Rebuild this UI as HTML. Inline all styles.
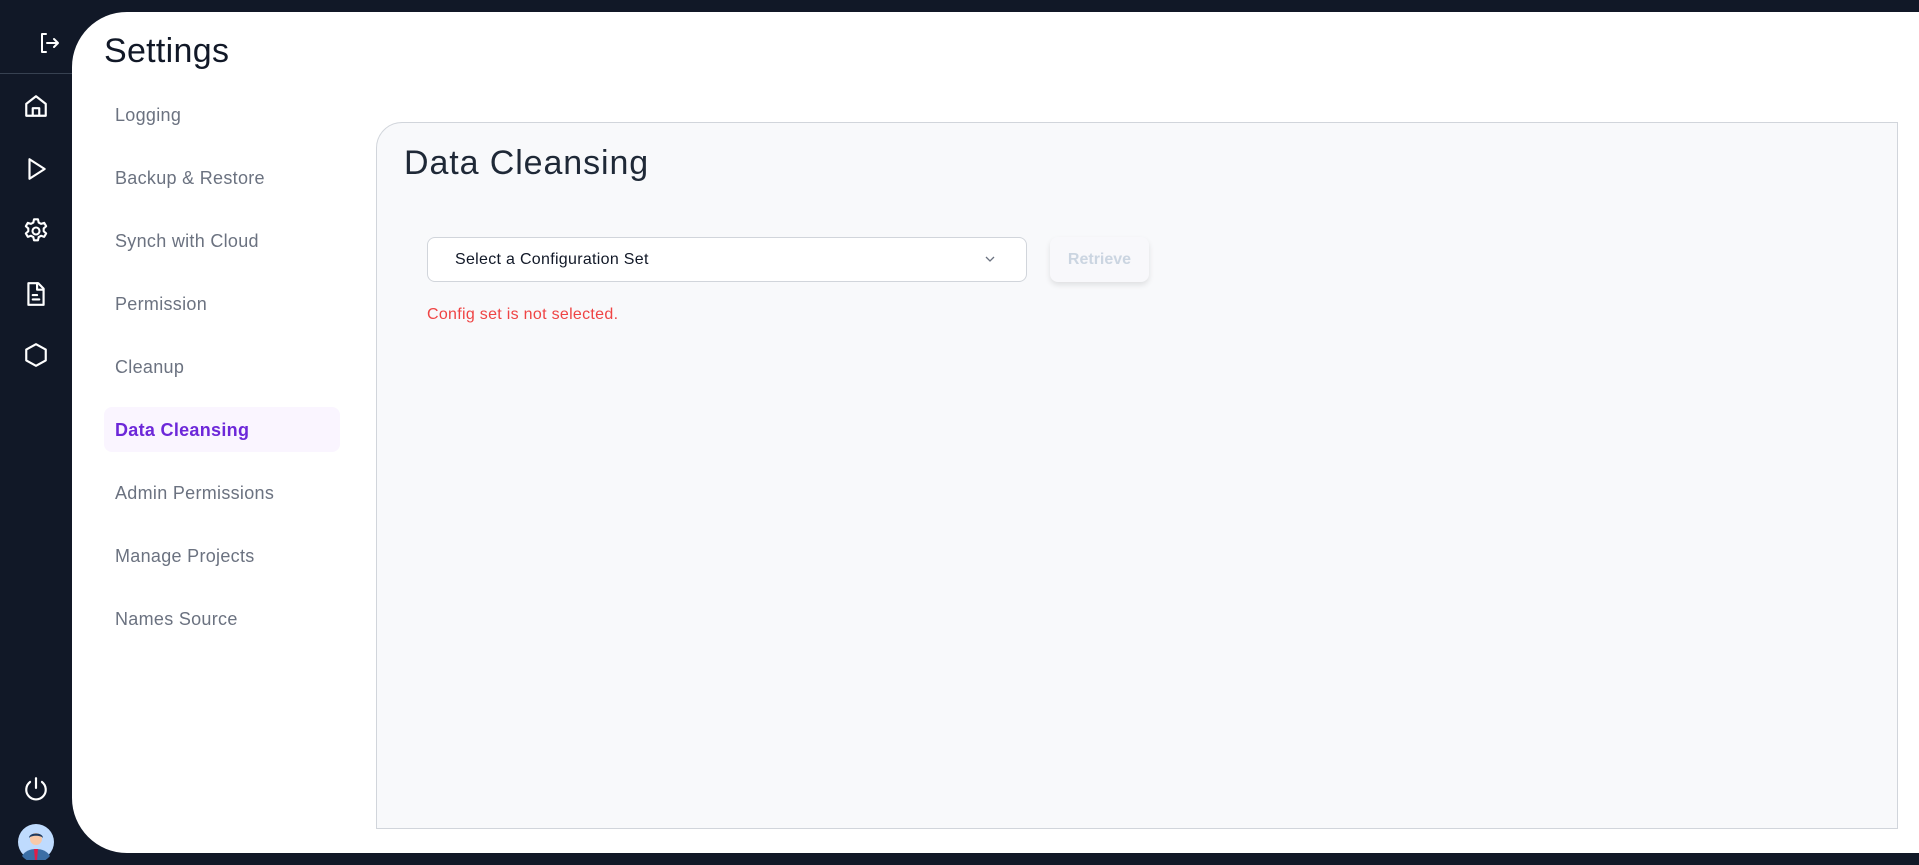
<!DOCTYPE html>
<html><head><meta charset="utf-8"><style>
*{margin:0;padding:0;box-sizing:border-box}
body{width:1919px;height:865px;background:#111827;font-family:"Liberation Sans",sans-serif;position:relative;overflow:hidden}
.main{position:absolute;left:72px;top:12px;width:1847px;height:841px;background:#fff;border-radius:55px 0 0 55px}
.ic{position:absolute;left:24px;width:24px;height:24px}
.div{position:absolute;left:0;top:73px;width:72px;height:1px;background:#374151}
h1{position:absolute;left:104px;top:32px;font-size:34px;font-weight:400;color:#111827;letter-spacing:0.3px}
.m{position:absolute;left:115px;font-size:18px;color:#6b7280;line-height:22px;letter-spacing:0.3px}
.act{position:absolute;left:104px;top:407px;width:236px;height:45px;background:#faf5ff;border-radius:8px}
.card{position:absolute;left:376px;top:122px;width:1522px;height:707px;background:#f8f9fb;border:1px solid #d1d5db;border-radius:26px 0 0 0}
.card h2{position:absolute;left:27px;top:21px;font-size:34px;font-weight:400;color:#1f2937;letter-spacing:0.9px}
.sel{position:absolute;left:50px;top:114px;width:600px;height:45px;background:#fff;border:1px solid #d1d5db;border-radius:8px;font-size:16px;color:#111827;padding-left:27px;line-height:43px;letter-spacing:0.3px}
.btn{position:absolute;left:673px;top:114px;width:99px;height:45px;background:#f8f8fb;border-radius:8px;box-shadow:0 3px 6px rgba(0,0,0,.1);color:#cbd5e1;font-weight:700;font-size:16px;text-align:center;line-height:45px}
.err{position:absolute;left:50px;top:182px;font-size:16px;color:#ef4444;letter-spacing:0.3px}
</style></head><body>
<svg class="ic" style="left:37px;top:31px" viewBox="0 0 24 24" fill="none" stroke="#fff" stroke-width="2" stroke-linecap="round" stroke-linejoin="round"><path d="M9 3H5v18h4M10 12h11M17 8l4 4-4 4"/></svg>
<div class="div"></div>
<svg class="ic" style="top:93px;width:26px;height:26px;left:23px" viewBox="0 0 24 24" fill="none" stroke="#fff" stroke-width="2" stroke-linejoin="round"><path d="M3 10l9-7 9 7v11H3z"/><path d="M9 21v-7h6v7"/></svg>
<svg class="ic" style="top:156px;width:26px;height:26px;left:23px" viewBox="0 0 24 24" fill="none" stroke="#fff" stroke-width="2" stroke-linejoin="round"><path d="M6 3l14 9-14 9z"/></svg>
<svg class="ic" style="top:217px;width:28px;height:28px;left:22px" viewBox="0 0 24 24" fill="none" stroke="#fff" stroke-width="1.8" stroke-linejoin="round"><circle cx="12" cy="12" r="3"/><path d="M10.3 2h3.4l.6 2.8 2 1.1 2.7-.9 1.7 2.9-2.1 1.9v2.4l2.1 1.9-1.7 2.9-2.7-.9-2 1.1-.6 2.8h-3.4l-.6-2.8-2-1.1-2.7.9-1.7-2.9 2.1-1.9V9.8L3.3 7.9 5 5l2.7.9 2-1.1z"/></svg>
<svg class="ic" style="top:281px;width:26px;height:26px;left:23px" viewBox="0 0 24 24" fill="none" stroke="#fff" stroke-width="2" stroke-linejoin="round"><path d="M5 2h9l5 5v15H5z"/><path d="M13 2v6h6M9 13h4M9 17h6" stroke-linecap="round"/></svg>
<svg class="ic" style="top:342px;width:26px;height:26px;left:23px" viewBox="0 0 24 24" fill="none" stroke="#fff" stroke-width="2" stroke-linejoin="round"><path d="M12 2l9 5v10l-9 5-9-5V7z"/></svg>
<svg class="ic" style="top:776px;width:26px;height:26px;left:23px" viewBox="0 0 24 24" fill="none" stroke="#fff" stroke-width="2" stroke-linecap="round"><path d="M12 2v9"/><path d="M6.5 5.5a9 9 0 1 0 11 0"/></svg>
<svg style="position:absolute;left:18px;top:824px" width="36" height="36" viewBox="0 0 36 36"><circle cx="18" cy="18" r="18" fill="#bfdbfe"/><path d="M4 32c3-5 8-7 14-7s11 2 14 7a18 18 0 0 1-28 0z" fill="#3b6ea5"/><path d="M16 25h4l-1 11h-2z" fill="#e11d48"/><circle cx="18" cy="15" r="6" fill="#f8c9a8"/><path d="M11 14c0-6 14-6 14 0-2-3-12-3-14 0z" fill="#1e3a5f"/></svg>
<div class="main"></div>
<h1>Settings</h1>
<div class="act"></div>
<div class="m" style="top:104px">Logging</div>
<div class="m" style="top:167px">Backup &amp; Restore</div>
<div class="m" style="top:230px">Synch with Cloud</div>
<div class="m" style="top:293px">Permission</div>
<div class="m" style="top:356px">Cleanup</div>
<div class="m" style="top:419px;color:#6d28d9;font-weight:700">Data Cleansing</div>
<div class="m" style="top:482px">Admin Permissions</div>
<div class="m" style="top:545px">Manage Projects</div>
<div class="m" style="top:608px">Names Source</div>
<div class="card">
<h2>Data Cleansing</h2>
<div class="sel">Select a Configuration Set<svg style="position:absolute;left:556px;top:17px" width="12" height="8" viewBox="0 0 12 8" fill="none" stroke="#6b7280" stroke-width="1.3"><path d="M2 2l4 4 4-4"/></svg></div>
<div class="btn">Retrieve</div>
<div class="err" style="top:183px">Config set is not selected.</div>
</div>
</body></html>
